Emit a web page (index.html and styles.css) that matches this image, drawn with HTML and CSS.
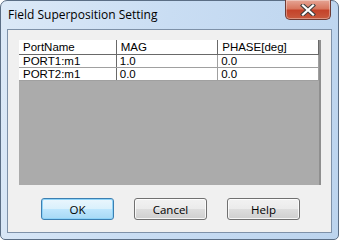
FILE: index.html
```html
<!DOCTYPE html>
<html lang="en">
<head>
    <meta charset="UTF-8" />
    <title>Field Superposition Setting</title>
    <link rel="stylesheet" href="styles.css">
</head>
<body>
    <div class="window">
        <div class="titlebar">
            <span class="title">Field Superposition Setting</span>
            <button class="close-btn" aria-label="Close">
                <svg viewBox="0 0 16 12" width="16" height="12">
                    <path d="M3 1.5 L13 10.5 M13 1.5 L3 10.5" stroke="#3d3d3d" stroke-width="4.2" stroke-linecap="square"/>
                    <path d="M3 1.5 L13 10.5 M13 1.5 L3 10.5" stroke="#ffffff" stroke-width="2.2" stroke-linecap="square"/>
                </svg>
            </button>
        </div>
        <div class="client">
            <div class="grid">
                <table class="ports">
                    <tr class="head">
                        <td class="c1">PortName</td>
                        <td class="c2">MAG</td>
                        <td class="c3">PHASE[deg]</td>
                    </tr>
                    <tr>
                        <td>PORT1:m1</td>
                        <td>1.0</td>
                        <td>0.0</td>
                    </tr>
                    <tr>
                        <td>PORT2:m1</td>
                        <td>0.0</td>
                        <td>0.0</td>
                    </tr>
                </table>
            </div>
            <div class="buttons">
                <button class="btn default">OK</button>
                <button class="btn">Cancel</button>
                <button class="btn">Help</button>
            </div>
        </div>
    </div>
</body>
</html>
```

FILE: styles.css
```css
body {
    margin: 0;
    width: 339px;
    height: 240px;
    overflow: hidden;
    background: #ffffff;
}
.window {
    position: relative;
    box-sizing: border-box;
    width: 339px;
    height: 240px;
    border: 1px solid #5b6e85;
    border-radius: 7px 7px 5px 5px;
    background: linear-gradient(100deg, #dce9f7 0%, #c9ddf3 45%, #bcd4ee 100%);
    padding: 0 6px 6px 6px;
    display: flex;
    flex-direction: column;
}
.titlebar {
    height: 28px;
    display: flex;
    align-items: center;
}
.title {
    font-family: "Open Sans", "Liberation Sans", sans-serif;
    font-size: 12px;
    color: #000;
    padding-left: 1px;
    margin-top: -1px;
}
.close-btn {
    position: absolute;
    top: -1px;
    right: 7px;
    width: 46px;
    height: 20px;
    padding: 0;
    border: 1px solid #6e3b34;
    border-top: none;
    border-radius: 0 0 5px 5px;
    background: linear-gradient(#e5a595 0%, #d8775f 45%, #c4432a 55%, #c85a3e 100%);
    display: flex;
    align-items: center;
    justify-content: center;
    box-shadow: inset 0 0 0 1px rgba(255, 255, 255, 0.35);
}
.client {
    flex: 1;
    border: 1px solid #7e91a8;
    background: #f0f0f0;
    display: flex;
    flex-direction: column;
}
.grid {
    margin: 10px 0 0 11px;
    width: 300px;
    height: 145px;
    background: #ababab;
    border-right: 2px solid #8f8f8f;
}
.ports {
    border-collapse: collapse;
    font-family: "Liberation Sans", Arial, sans-serif;
    font-size: 11.5px;
    color: #000;
}
.ports td {
    background: #ffffff;
    border-right: 1px solid #a0a0a0;
    border-bottom: 1px solid #a0a0a0;
    height: 12px;
    line-height: 12px;
    padding: 0 0 0 3px;
    white-space: nowrap;
}
.ports .head td {
    height: 14px;
    line-height: 14px;
    padding-left: 4px;
    border-right: 1px solid #696969;
    border-bottom: 1px solid #696969;
}
.ports tr:not(.head) td:first-child {
    padding-left: 4px;
    border-right: 1px solid #696969;
}
.c1 { width: 93px; }
.c2 { width: 97px; }
.c3 { width: 96px; }
.buttons {
    display: flex;
    gap: 20px;
    margin: 13px 0 0 33px;
}
.btn {
    width: 73px;
    height: 22px;
    padding: 0;
    border: 1px solid #707070;
    border-radius: 3px;
    background: linear-gradient(#f2f2f2 0%, #ebebeb 50%, #dddddd 51%, #cfcfcf 100%);
    box-shadow: inset 0 0 0 1px rgba(255, 255, 255, 0.8);
    font-family: "Open Sans", "Liberation Sans", sans-serif;
    font-size: 11.5px;
    color: #000;
}
.btn.default {
    border-color: #3c7fb1;
    background: linear-gradient(#eaf6fd 0%, #d9f0fc 50%, #bee6fd 51%, #a7d9f5 100%);
    box-shadow: inset 0 0 0 1px #8ed3f8;
}
```
